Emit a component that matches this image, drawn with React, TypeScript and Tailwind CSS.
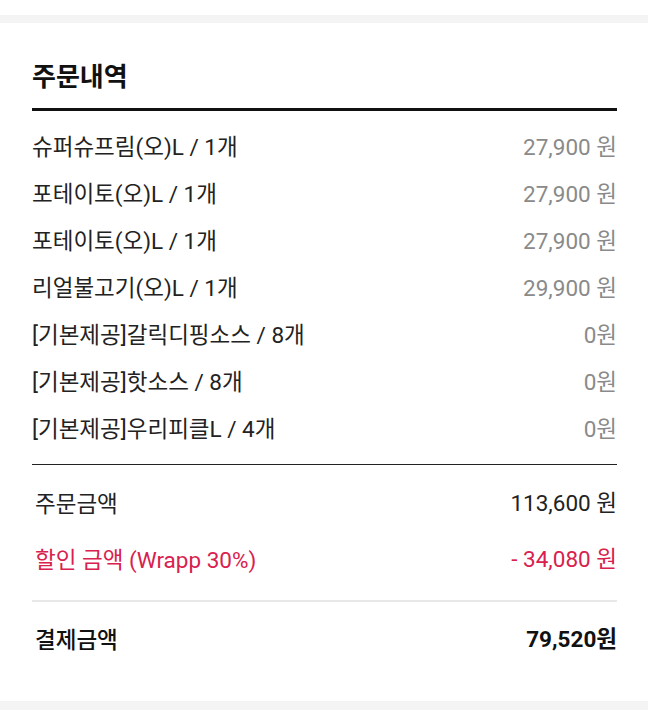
import React from "react";

const items: [string, string][] = [
  ["슈퍼슈프림(오)L / 1개", "27,900 원"],
  ["포테이토(오)L / 1개", "27,900 원"],
  ["포테이토(오)L / 1개", "27,900 원"],
  ["리얼불고기(오)L / 1개", "29,900 원"],
  ["[기본제공]갈릭디핑소스 / 8개", "0원"],
  ["[기본제공]핫소스 / 8개", "0원"],
  ["[기본제공]우리피클L / 4개", "0원"],
];

export default function App() {
  return (
    <div
      className="w-[648px] min-h-[728px] bg-white"
      style={{ fontFamily: 'Roboto, "Noto Sans CJK KR", sans-serif' }}
    >
      <div className="h-[15px] bg-white" />
      <div className="h-[8px] bg-[#f4f4f4]" />
      <div className="pl-[32px] pr-[31px]">
        <h2 className="pt-[38px] text-[26px] font-bold leading-[32px] text-[#111]">주문내역</h2>
        <div className="mt-[15px] h-[3px] bg-[#111]" />
        <div className="pt-[13.5px]">
          {items.map(([name, price], i) => (
            <div key={i} className="flex h-[47px] items-center justify-between text-[22.5px]">
              <span className="text-[#222]">{name}</span>
              <span className="text-[#8a8a8a]">{price}</span>
            </div>
          ))}
        </div>
        <div className="mt-[10.5px] h-px bg-[#222]" />
        <div className="mt-[16.5px] flex h-[47px] items-center justify-between pl-[3px] text-[22.5px] text-[#222]">
          <span>주문금액</span>
          <span className="-mt-[3px]">113,600 원</span>
        </div>
        <div className="mt-[9px] flex h-[47px] items-center justify-between pl-[3px] text-[22.5px] text-[#d8214d]">
          <span>할인 금액 (Wrapp 30%)</span>
          <span className="-mt-[3px]">- 34,080 원</span>
        </div>
        <div className="mt-[15.5px] h-[2px] bg-[#e8e8e8]" />
        <div className="mt-[15.5px] flex h-[47px] items-center justify-between pl-[3px] text-[22.5px] text-[#111]">
          <span className="font-medium">결제금액</span>
          <span className="font-bold -mt-[3px]">79,520원</span>
        </div>
        <div className="h-[36.5px]" />
      </div>
      <div className="h-[9px] bg-[#f4f4f4]" />
      <div className="h-[18px] bg-white" />
    </div>
  );
}
